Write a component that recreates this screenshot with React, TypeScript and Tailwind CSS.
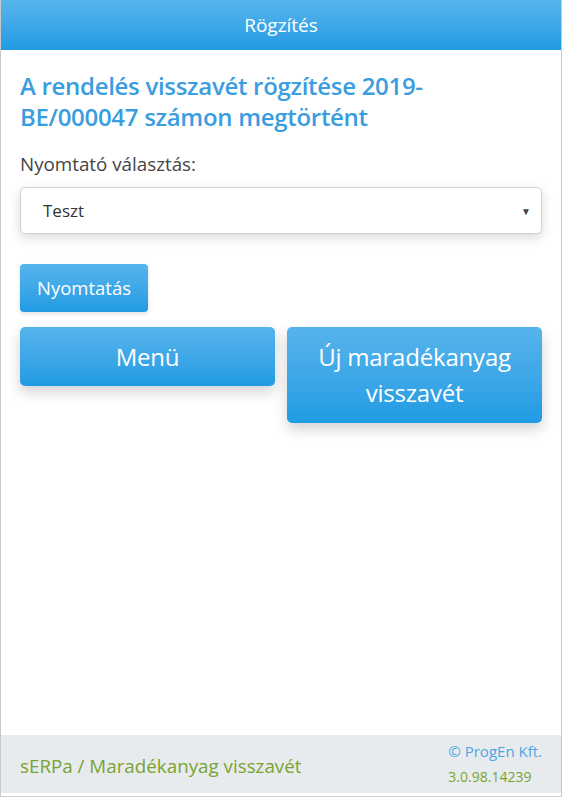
import React from "react";

export default function App() {
  const font = { fontFamily: '"Open Sans", "Noto Sans", sans-serif' };
  return (
    <div
      className="h-[797px] w-[562px] flex flex-col bg-white border-x border-[#c8c8c8] overflow-hidden"
      style={font}
    >
      <div className="h-[50px] shrink-0 flex items-center justify-center bg-gradient-to-b from-[#56b4ec] to-[#1f9be3] text-white text-[19px]">
        Rögzítés
      </div>
      <div className="flex-1 px-[19px] pt-[20px]">
        <h1 className="text-[#3a9de0] text-[24px] leading-[31px] font-semibold tracking-[-0.3px]">
          A rendelés visszavét rögzítése 2019-
          <br />
          BE/000047 számon megtörtént
        </h1>
        <div className="mt-[20px] text-[#444] text-[18.8px] leading-[24px]">
          Nyomtató választás:
        </div>
        <div className="mt-[11px] relative h-[47px] rounded-[5px] border border-[#cdd3db] bg-white shadow-[0_4px_12px_rgba(0,0,0,0.15)] flex items-center pl-[22px] text-[17px] text-[#333]">
          Teszt
          <span className="absolute right-[10px] top-[16px] text-[10px] text-[#444]">▼</span>
        </div>
        <button className="mt-[30px] h-[48px] w-[128px] rounded-[4px] bg-gradient-to-b from-[#56b4ec] to-[#1f9be3] text-white text-[18.5px] shadow-[0_2px_4px_rgba(0,0,0,0.12)]">
          Nyomtatás
        </button>
        <div className="mt-[15px] flex items-start gap-[12px]">
          <button className="w-[255px] h-[59px] rounded-[5px] bg-gradient-to-b from-[#56b4ec] to-[#1f9be3] text-white text-[24px] tracking-[-0.2px] shadow-[0_6px_14px_rgba(0,0,0,0.18)]">
            Menü
          </button>
          <button className="w-[255px] h-[96px] rounded-[5px] bg-gradient-to-b from-[#56b4ec] to-[#1f9be3] text-white text-[24px] leading-[36px] tracking-[-0.2px] shadow-[0_6px_14px_rgba(0,0,0,0.18)]">
            Új maradékanyag
            <br />
            visszavét
          </button>
        </div>
      </div>
      <div className="h-[58px] shrink-0 bg-[#e8ebee] flex items-center justify-between pl-[19px] pr-[19px]">
        <div className="text-[#79a330] text-[18.8px] mt-[4px]">
          sERPa / Maradékanyag visszavét
        </div>
        <div className="flex flex-col items-start text-[14px] leading-[25px]">
          <span className="text-[#4aa6e6] text-[15px]">© ProgEn Kft.</span>
          <span className="text-[#79a330]">3.0.98.14239</span>
        </div>
      </div>
      <div className="h-[4px] shrink-0 bg-white border-b border-[#d0d0d0]" />
    </div>
  );
}
